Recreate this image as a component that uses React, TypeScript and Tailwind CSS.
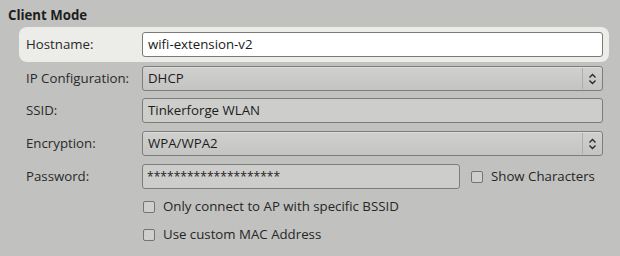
import React from "react";

function UpDownArrows() {
    return (
        <svg width="9" height="12" viewBox="0 0 9 12" fill="none" stroke="#2a2a2a" strokeWidth="1.4">
            <path d="M1.5 4.5 L4.5 1.5 L7.5 4.5" />
            <path d="M1.5 7.5 L4.5 10.5 L7.5 7.5" />
        </svg>
    );
}

function Combo({ value }: { value: string }) {
    return (
        <div className="flex-1 h-[25px] flex items-center rounded-[3px] border border-[#7d7d7b] bg-gradient-to-b from-[#d0d0ce] to-[#c4c4c2] shadow-[inset_0_1px_0_#dcdcda]">
            <span className="flex-1 pl-[5px] text-[13.25px] text-[#1c1c1c] leading-none">{value}</span>
            <span className="w-px h-[21px] bg-[#adadab]" />
            <span className="w-[19px] flex items-center justify-center">
                <UpDownArrows />
            </span>
        </div>
    );
}

function Checkbox({ label }: { label: string }) {
    return (
        <div className="flex items-center">
            <span className="w-[12px] h-[12px] rounded-[2px] border border-[#747472] bg-[#cfcfcd]" />
            <span className="ml-[8px] text-[13.25px] text-[#262626] leading-none">{label}</span>
        </div>
    );
}

export default function App() {
    return (
        <div
            className="w-[620px] h-[256px] bg-[#c1c1bf] pt-[6px] overflow-hidden"
            style={{ fontFamily: '"Open Sans", "DejaVu Sans", sans-serif' }}
        >
            <div className="pl-[8px] h-[20px] flex items-center text-[13.25px] font-bold text-[#1e1e1e]">Client Mode</div>

            <div className="mt-[1px] ml-[19px] mr-[11px] h-[35px] rounded-[8px] bg-[#ecece9] flex items-center pl-[7px] pr-[6px]">
                <div className="w-[116px] text-[13.25px] text-[#2a2a2a]">Hostname:</div>
                <div className="flex-1 h-[25px] flex items-center rounded-[3px] border border-[#7a7a78] bg-white pl-[5px] text-[13.25px] text-[#1a1a1a]">
                    wifi-extension-v2
                </div>
            </div>

            <div className="mt-[4px] pl-[26px] pr-[17px] flex items-center">
                <div className="w-[116px] text-[13.25px] text-[#2a2a2a]">IP Configuration:</div>
                <Combo value="DHCP" />
            </div>

            <div className="mt-[7px] pl-[26px] pr-[17px] flex items-center">
                <div className="w-[116px] text-[13.25px] text-[#2a2a2a]">SSID:</div>
                <div className="flex-1 h-[25px] flex items-center rounded-[3px] border border-[#7d7d7b] bg-[#cdcdcb] pl-[5px] text-[13.25px] text-[#1c1c1c]">
                    Tinkerforge WLAN
                </div>
            </div>

            <div className="mt-[8px] pl-[26px] pr-[17px] flex items-center">
                <div className="w-[116px] text-[13.25px] text-[#2a2a2a]">Encryption:</div>
                <Combo value="WPA/WPA2" />
            </div>

            <div className="mt-[8px] pl-[26px] flex items-center">
                <div className="w-[116px] text-[13.25px] text-[#2a2a2a]">Password:</div>
                <div className="w-[318px] h-[25px] flex items-center rounded-[3px] border border-[#7d7d7b] bg-[#cdcdcb] pl-[4px] text-[12px] text-[#1c1c1c] tracking-[0.05px]">
                    ********************
                </div>
                <div className="ml-[11px]">
                    <Checkbox label="Show Characters" />
                </div>
            </div>

            <div className="mt-[11px] pl-[143px] flex flex-col gap-[15px]">
                <Checkbox label="Only connect to AP with specific BSSID" />
                <Checkbox label="Use custom MAC Address" />
            </div>
        </div>
    );
}
